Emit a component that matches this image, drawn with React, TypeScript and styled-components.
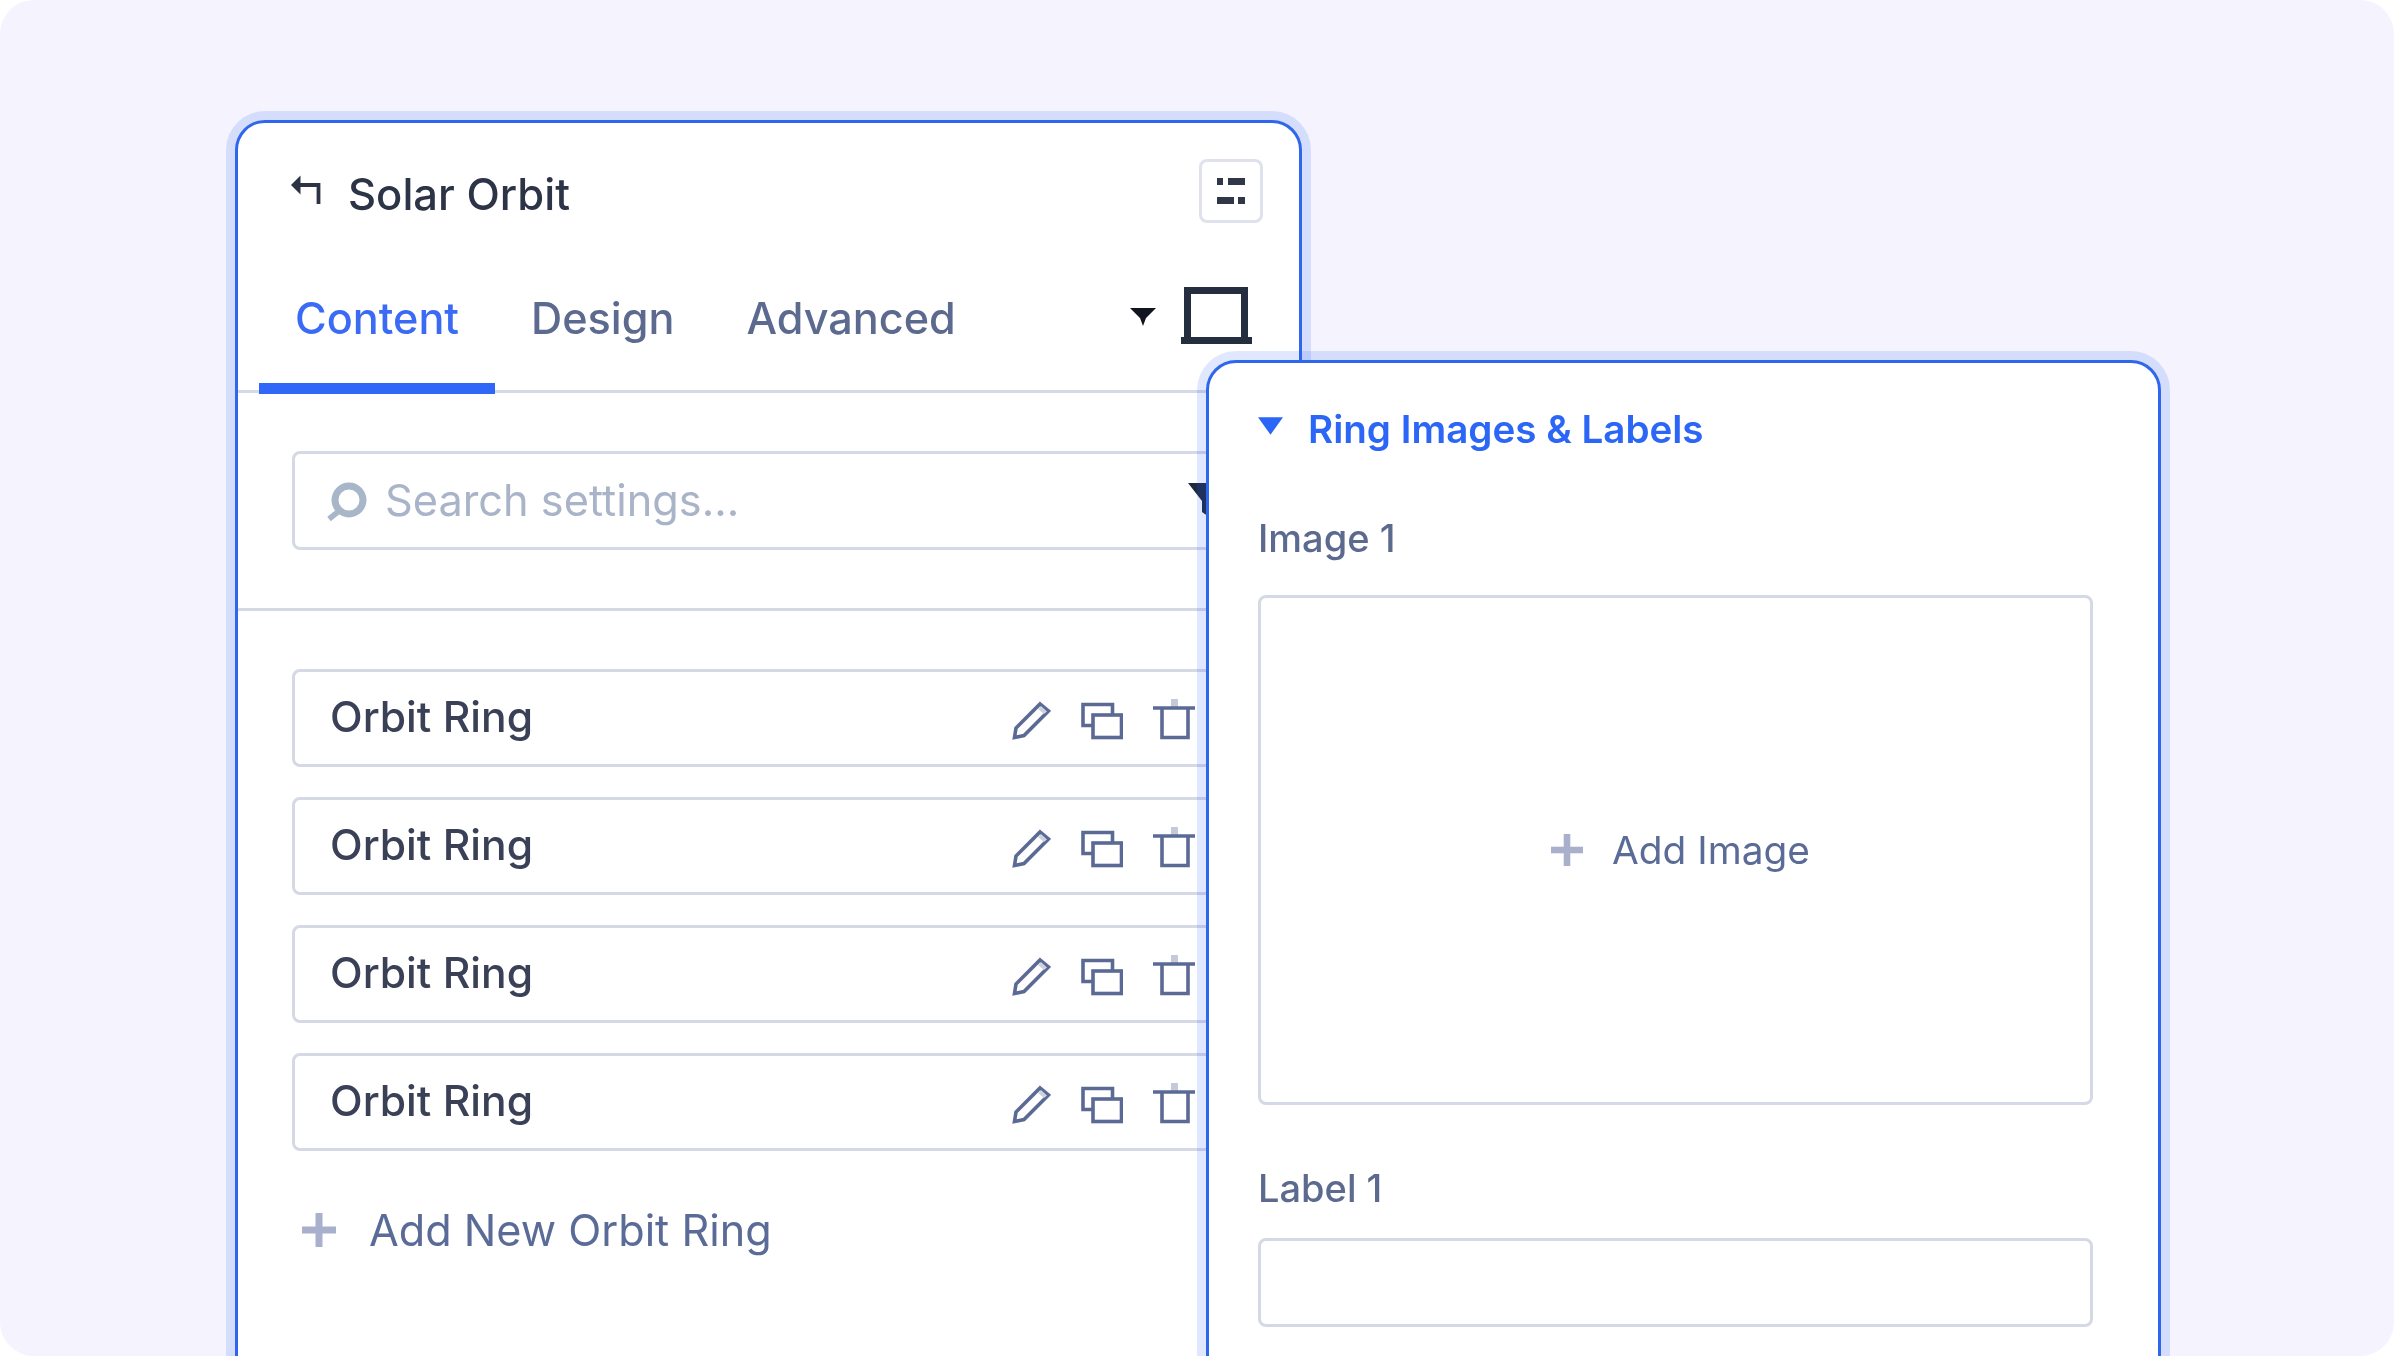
import React from "react";
import styled, { createGlobalStyle } from "styled-components";

const GlobalStyle = createGlobalStyle`
  html, body {
    margin: 0;
    background: #fff;
    overflow: hidden;
  }
  * {
    box-sizing: border-box;
  }
`;

const rings = ["a", "b", "c", "d"];

function BackIcon() {
  return (
    <BackSvg viewBox="0 0 30 30">
      <path d="M0 10 L9.5 0.5 V19.5 Z" fill="#2b3344" />
      <path d="M7 10 H27.5 V29" fill="none" stroke="#2b3344" strokeWidth="3.8" />
    </BackSvg>
  );
}

function LayoutIcon() {
  return (
    <svg width="28" height="26" viewBox="0 0 28 26" fill="#2f3748">
      <rect x="0" y="0" width="6" height="7" />
      <rect x="11" y="0" width="17" height="7" />
      <rect x="0" y="19" width="17" height="7" />
      <rect x="21" y="19" width="7" height="7" />
    </svg>
  );
}

function Caret() {
  return (
    <CaretSvg viewBox="0 0 26 18">
      <path d="M0 0 H26 L16 10 L13 18 L10 10 Z" fill="#11151f" />
    </CaretSvg>
  );
}

function MonitorIcon() {
  return (
    <svg width="71" height="57" viewBox="0 0 71 57">
      <path d="M6.5 53 V3.5 H63.5 V53" fill="none" stroke="#252e3f" strokeWidth="7" />
      <rect x="0" y="50" width="71" height="7" fill="#252e3f" />
    </svg>
  );
}

function SearchIcon() {
  return (
    <svg width="42" height="42" viewBox="0 0 42 42" fill="none" stroke="#a8b6c9">
      <circle cx="23" cy="20" r="14" strokeWidth="7" />
      <path d="M13 31 L3 39" strokeWidth="5.5" />
    </svg>
  );
}

function FunnelIcon() {
  return (
    <svg width="38" height="36" viewBox="0 0 38 36">
      <path d="M0 0 H38 L24 18 V36 L14 29 V18 Z" fill="#1e2a42" />
    </svg>
  );
}

function PencilIcon() {
  return (
    <svg width="42" height="42" viewBox="0 0 42 42" fill="none" stroke="#5a6a94" strokeWidth="3.6">
      <path d="M5.5 38.5 L7 29 L31 5 L39.5 12 L15 36.5 Z" />
      <path d="M32 7 L38 12.5 L35 15 L29 10 Z" fill="#cdd2e0" stroke="none" />
    </svg>
  );
}

function CopyIcon() {
  return (
    <svg width="42" height="42" viewBox="0 0 42 42" fill="none" stroke="#5a6a94" strokeWidth="3.6">
      <path d="M12 26.5 H2 V5.5 H31.5 V16" />
      <rect x="12" y="16" width="28.5" height="22.5" />
    </svg>
  );
}

function TrashIcon() {
  return (
    <svg width="42" height="42" viewBox="0 0 42 42" fill="none" stroke="#5a6a94" strokeWidth="3.6">
      <rect x="18" y="0" width="7" height="8" fill="#c5cad9" stroke="none" />
      <path d="M0 9 H42" />
      <path d="M9 9 V38.5 H35 V9" />
    </svg>
  );
}

function PlusIcon({ size = 34 }: { size?: number }) {
  return (
    <svg width={size} height={size} viewBox="0 0 34 34" fill="#a9b0cc">
      <rect x="13.5" y="0" width="7" height="34" />
      <rect x="0" y="13.5" width="34" height="7" />
    </svg>
  );
}

export default function App() {
  return (
    <>
      <GlobalStyle />
      <Stage>
        <SettingsPanel>
          <Header>
            <HeaderTitle>
              <BackIcon />
              <Title>Solar Orbit</Title>
            </HeaderTitle>
            <SquareButton>
              <LayoutIcon />
            </SquareButton>
          </Header>

          <TabBar>
            <Tab $active>Content</Tab>
            <Tab>Design</Tab>
            <Tab>Advanced</Tab>
            <DeviceTools>
              <Caret />
              <MonitorIcon />
            </DeviceTools>
          </TabBar>

          <SearchSection>
            <SearchBox>
              <SearchIcon />
              <SearchText>Search settings...</SearchText>
              <FunnelSlot>
                <FunnelIcon />
              </FunnelSlot>
            </SearchBox>
          </SearchSection>

          <RingList>
            {rings.map((id) => (
              <RingRow key={id}>
                <RingName>Orbit Ring</RingName>
                <RowActions>
                  <PencilIcon />
                  <CopyIcon />
                  <TrashIcon />
                </RowActions>
              </RingRow>
            ))}
            <AddRing>
              <PlusIcon />
              <AddRingText>Add New Orbit Ring</AddRingText>
            </AddRing>
          </RingList>
        </SettingsPanel>

        <DetailPanel>
          <SectionTitle>
            <BlueCaret viewBox="0 0 26 18">
              <path d="M0 0 H26 L13 18 Z" fill="#2b66f6" />
            </BlueCaret>
            <SectionText>Ring Images &amp; Labels</SectionText>
          </SectionTitle>

          <FieldLabel>Image 1</FieldLabel>
          <ImageDrop>
            <PlusIcon size={32} />
            <AddImageText>Add Image</AddImageText>
          </ImageDrop>

          <LabelGap>Label 1</LabelGap>
          <TextField />
        </DetailPanel>
      </Stage>
    </>
  );
}

const Stage = styled.div`
  position: relative;
  width: 2394px;
  height: 1356px;
  padding: 120px 0 0 235px;
  background: #f4f3fe;
  border-radius: 34px;
  overflow: hidden;
  font-family: Inter, "Liberation Sans", sans-serif;
  filter: blur(0.6px);
`;

const SettingsPanel = styled.div`
  width: 1067px;
  height: 1400px;
  background: #fff;
  border: 3px solid #2f66ee;
  border-radius: 30px;
  box-shadow: 0 0 0 9px rgba(43, 102, 246, 0.15);
`;

const Header = styled.div`
  display: flex;
  align-items: center;
  justify-content: space-between;
  padding: 36px 36px 0 53px;
`;

const HeaderTitle = styled.div`
  display: flex;
  align-items: center;
  gap: 27px;
`;

const BackSvg = styled.svg`
  width: 30px;
  height: 30px;
  margin-top: -2px;
`;

const Title = styled.span`
  padding-top: 6px;
  font-size: 43.5px;
  font-weight: 550;
  color: #2d3448;
  line-height: 52px;
`;

const SquareButton = styled.div`
  display: flex;
  align-items: center;
  justify-content: center;
  width: 64px;
  height: 64px;
  border: 3px solid #dfe2ec;
  border-radius: 8px;
`;

const TabBar = styled.div`
  display: flex;
  align-items: flex-start;
  padding: 0 47px 0 21px;
  border-bottom: 3px solid #d5d8e5;
`;

const Tab = styled.div<{ $active?: boolean }>`
  height: 171px;
  margin-bottom: -4px;
  padding: 71px 36px 0;
  font-size: 43.2px;
  font-weight: 500;
  line-height: 48px;
  color: ${(p) => (p.$active ? "#3b6bf5" : "#5d6a8f")};
  border-bottom: 11px solid ${(p) => (p.$active ? "#2f68f8" : "transparent")};
`;

const DeviceTools = styled.div`
  display: flex;
  align-items: center;
  gap: 25px;
  margin: 64px 0 0 auto;
`;

const CaretSvg = styled.svg`
  width: 26px;
  height: 18px;
  margin-top: 3px;
`;

const SearchSection = styled.div`
  padding: 58px 54px;
  border-bottom: 3px solid #d5d8e5;
`;

const SearchBox = styled.div`
  display: flex;
  align-items: center;
  gap: 17px;
  height: 99px;
  padding: 0 16px 0 31px;
  border: 3px solid #d5d8e5;
  border-radius: 8px;
`;

const SearchText = styled.span`
  margin-top: -2px;
  font-size: 43.3px;
  color: #a9b4c8;
`;

const FunnelSlot = styled.div`
  display: flex;
  margin-left: auto;
`;

const RingList = styled.div`
  display: flex;
  flex-direction: column;
  gap: 30px;
  padding: 58px 54px 0;
`;

const RingRow = styled.div`
  display: flex;
  align-items: center;
  justify-content: space-between;
  height: 98px;
  padding: 0 47px 0 35px;
  border: 3px solid #d5d8e5;
  border-radius: 8px;
`;

const RingName = styled.span`
  margin-top: -3px;
  font-size: 42.6px;
  font-weight: 550;
  color: #3a4055;
`;

const RowActions = styled.div`
  display: flex;
  gap: 30px;
  margin-top: 4px;
`;

const AddRing = styled.div`
  display: flex;
  align-items: center;
  gap: 33px;
  margin-top: 25px;
  padding-left: 10px;
`;

const AddRingText = styled.span`
  font-size: 43.2px;
  font-weight: 400;
  line-height: 48px;
  color: #5b6b98;
`;

const DetailPanel = styled.div`
  position: absolute;
  top: 360px;
  left: 1206px;
  width: 955px;
  height: 1100px;
  padding: 42px 65px 0 49px;
  background: #fff;
  border: 3px solid #2f66ee;
  border-radius: 30px;
  box-shadow: 0 0 0 9px rgba(43, 102, 246, 0.15);
`;

const SectionTitle = styled.div`
  display: flex;
  align-items: center;
  gap: 25px;
`;

const BlueCaret = styled.svg`
  width: 25px;
  height: 18px;
  margin-top: -6px;
`;

const SectionText = styled.span`
  font-size: 38.6px;
  font-weight: 600;
  line-height: 48px;
  color: #2b66f6;
`;

const FieldLabel = styled.div`
  margin: 61px 0 33px;
  font-size: 38px;
  font-weight: 500;
  line-height: 48px;
  color: #5d6a8f;
`;

const LabelGap = styled(FieldLabel)`
  margin: 59px 0 26px;
`;

const ImageDrop = styled.div`
  display: flex;
  align-items: center;
  justify-content: center;
  gap: 29px;
  height: 510px;
  padding-left: 10px;
  border: 3px solid #d5d8e5;
  border-radius: 8px;
`;

const AddImageText = styled.span`
  margin-top: -2px;
  font-size: 38.8px;
  color: #5b6b98;
`;

const TextField = styled.div`
  height: 89px;
  border: 3px solid #d5d8e5;
  border-radius: 8px;
`;
